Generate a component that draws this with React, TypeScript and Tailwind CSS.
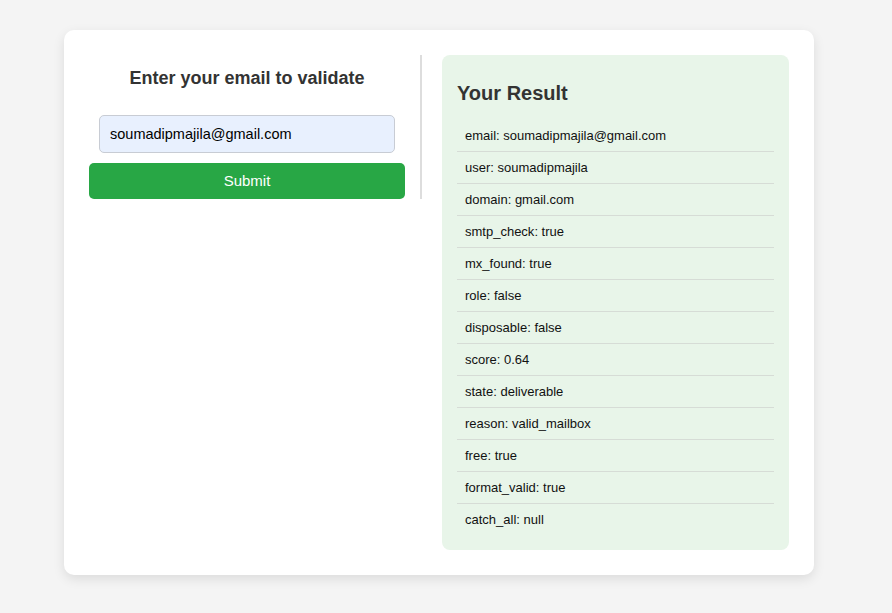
import React from 'react';

const result: [string, string][] = [
  ['email', 'soumadipmajila@gmail.com'],
  ['user', 'soumadipmajila'],
  ['domain', 'gmail.com'],
  ['smtp_check', 'true'],
  ['mx_found', 'true'],
  ['role', 'false'],
  ['disposable', 'false'],
  ['score', '0.64'],
  ['state', 'deliverable'],
  ['reason', 'valid_mailbox'],
  ['free', 'true'],
  ['format_valid', 'true'],
  ['catch_all', 'null'],
];

const App: React.FC = () => {
  return (
    <div className="min-h-screen bg-[#f4f4f4] pt-[30px] font-['Liberation_Sans',Arial,sans-serif]">
      <div className="ml-[64px] w-[750px] h-[545px] bg-white rounded-[10px] shadow-[0_4px_12px_rgba(0,0,0,0.1)] p-[25px] flex items-start">
        {/* form */}
        <div className="w-[333px] pr-[15px] border-r-2 border-[#ddd]">
          <h2 className="mt-[13px] text-center text-[18px] leading-[21px] font-bold text-[#333]">
            Enter your email to validate
          </h2>
          <input
            type="email"
            defaultValue="soumadipmajila@gmail.com"
            className="block mx-[10px] mt-[26px] w-[296px] h-[38px] px-[10px] bg-[#e8f0fe] border border-[#c8ccd4] rounded-[5px] text-[14.5px] text-black outline-none"
          />
          <button className="mt-[10px] w-full h-[36px] bg-[#28a745] text-white text-[15px] rounded-[5px]">
            Submit
          </button>
        </div>

        {/* result */}
        <div className="ml-[20px] w-[347px] bg-[#e8f5e9] rounded-[8px] px-[15px] pt-[15px] pb-[14px]">
          <h2 className="mt-[12px] text-[20px] leading-[23px] font-bold text-[#333]">Your Result</h2>
          <ul className="mt-[15px]">
            {result.map(([k, v], i) => (
              <li
                key={k}
                className={`h-[32px] px-[8px] flex items-center text-[13px] text-[#111] ${
                  i < result.length - 1 ? 'border-b border-[#d6dcd6]' : ''
                }`}
              >
                {k}: {v}
              </li>
            ))}
          </ul>
        </div>
      </div>
    </div>
  );
};

export default App;
